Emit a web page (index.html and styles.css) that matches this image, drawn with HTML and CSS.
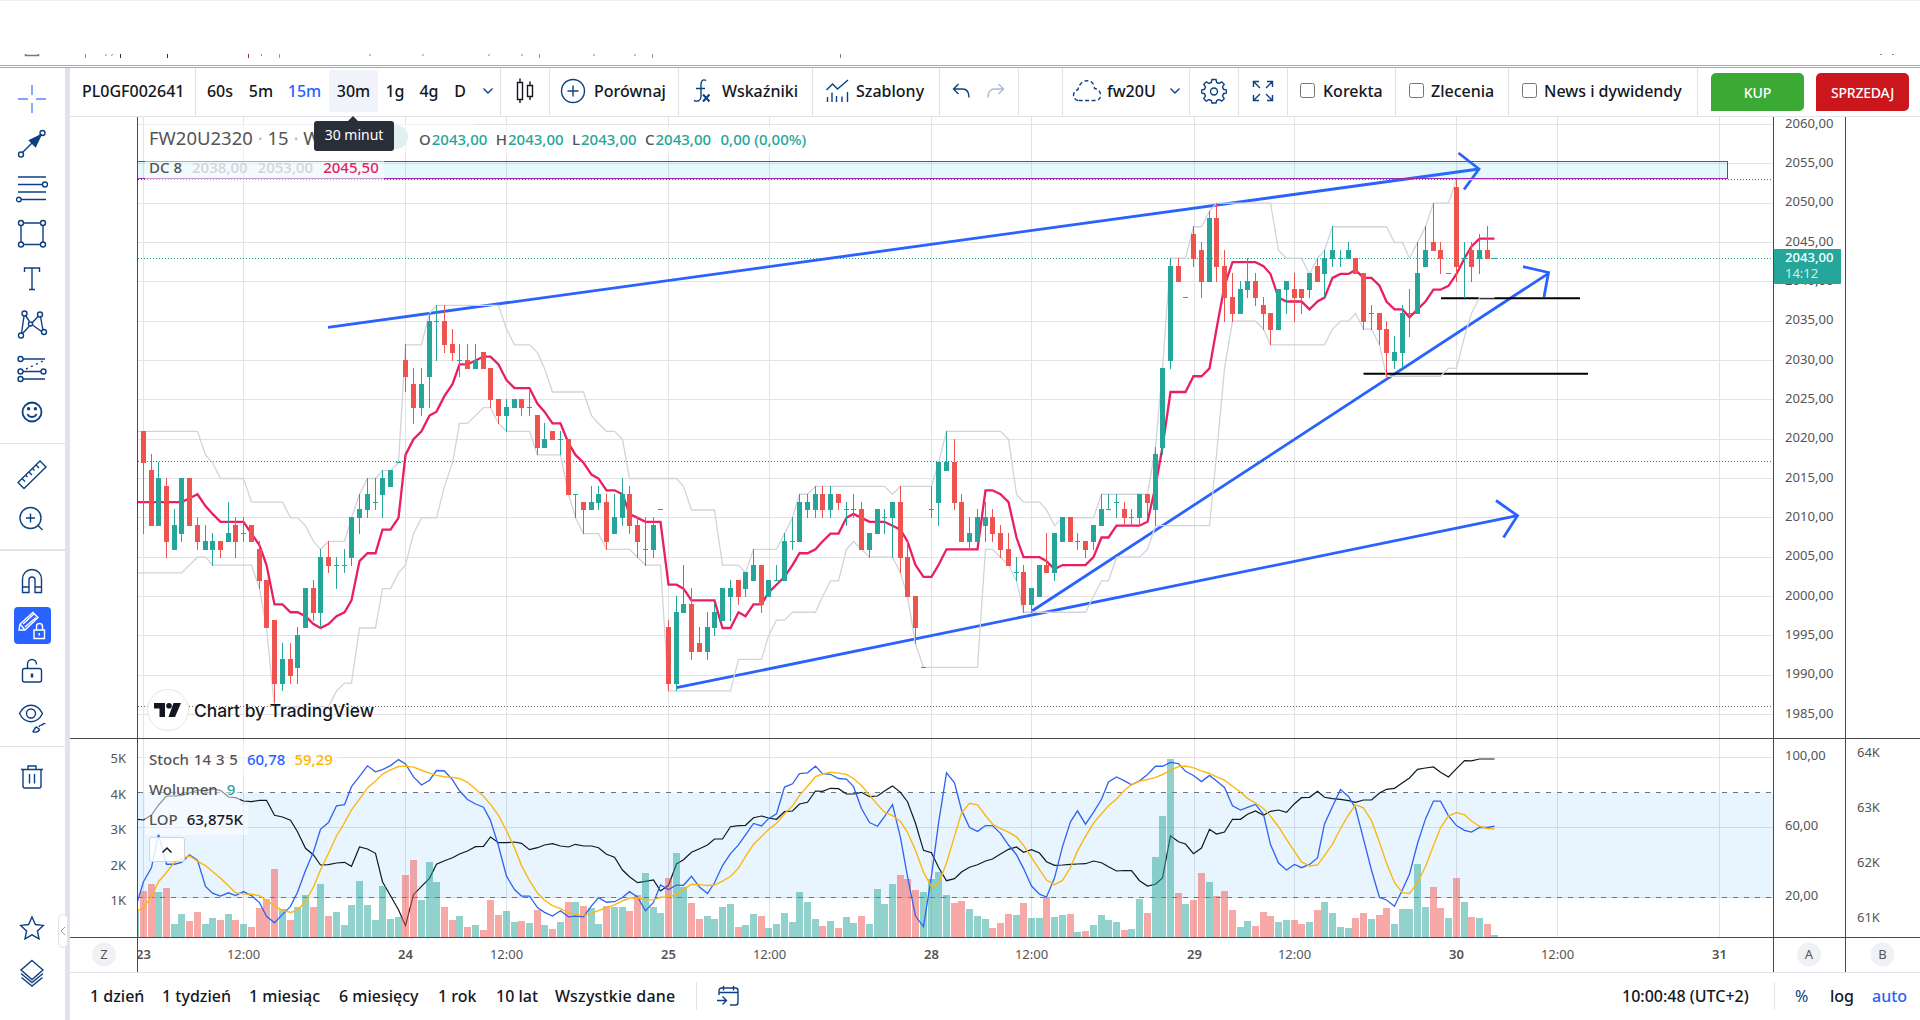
FILE: index.html
```html
<!DOCTYPE html>
<html lang="pl">
<head>
    <meta charset="UTF-8">
    <meta name="viewport" content="width=device-width, initial-scale=1.0">
    <title>FW20U2320</title>
    <link rel="stylesheet" href="styles.css">
</head>
<body>

<div class="browser-strip">
    <svg width="1920" height="65" viewBox="0 0 1920 65" fill="none">
        <path d="M25.500 54v1.500h13V54" stroke="#777" stroke-width="1.500"/>
        <path d="M85.500 54v4M261.500 54v2M279.500 54v4M539.500 54v4M652.500 54v4" stroke="#999"/>
        <path d="M106.500 54l-1 2M112.500 54l-1 2M370.500 54l-1 2M423.500 54l-1 2M489.500 54l-1 2M522.500 54l-1 2M594.500 54l-1 2M635.500 54l-1 2M1880 54.500h2M1892 54.500h2" stroke="#888"/>
        <path d="M120.500 54v4M167.500 54v4" stroke="#333"/>
        <path d="M248.500 54v4" stroke="#933"/>
        <path d="M840.500 54v4" stroke="#77a"/>
    </svg>
</div>

<div class="app">
    <nav class="sidebar">
        <div class="tools tools-draw">
            <button class="tool"><svg width="32" height="32" viewBox="0 0 32 32" class="light"><path d="M16 2v10M16 20v10M2 16h10M20 16h10"/></svg></button>
            <button class="tool"><svg width="32" height="32" viewBox="0 0 32 32"><path d="M6.500 24.500L24 7"/><circle cx="5" cy="26.500" r="2.500"/><circle cx="26.500" cy="5" r="2.500"/><path class="solid" d="M25 7L13.500 12.500l6 6z"/></svg></button>
            <button class="tool"><svg width="32" height="32" viewBox="0 0 32 32"><path d="M2 4h28M2 11.500h25M2 19h28M5 26.500h25"/><circle cx="29" cy="11.500" r="2.500"/><circle cx="2.800" cy="26.500" r="2.300"/></svg></button>
            <button class="tool"><svg width="32" height="32" viewBox="0 0 32 32"><path d="M7.500 5h17M7.500 26.500h17M5 7.500v16.500M27 7.500v16.500"/><circle cx="5" cy="5" r="2.500"/><circle cx="27" cy="5" r="2.500"/><circle cx="5" cy="26.500" r="2.500"/><circle cx="27" cy="26.500" r="2.500"/></svg></button>
            <button class="tool"><svg width="32" height="32" viewBox="0 0 32 32"><path d="M8.500 9V5h15v4M16 5v21.500M13 26.500h6"/></svg></button>
            <button class="tool"><svg width="32" height="32" viewBox="0 0 32 32"><path d="M8 8L5.500 25.500M9.500 7.500l4 6M16 15l6.500-7M7 25l6.500-7M16.500 17l9 6.500M24.500 8.500l2.500 14"/><circle cx="8.500" cy="5.500" r="2.500"/><circle cx="24" cy="6.500" r="2.500"/><circle cx="14.500" cy="16" r="2"/><circle cx="5" cy="27.500" r="2.500"/><circle cx="28" cy="24" r="2.500"/></svg></button>
            <button class="tool"><svg width="32" height="32" viewBox="0 0 32 32"><path d="M7 6h22M7 18.500h18M7 26h22"/><path d="M10 16l17-8" stroke-dasharray="2 3.500"/><circle cx="4.500" cy="6" r="2.500"/><circle cx="4.500" cy="18.500" r="2.500"/><circle cx="27.500" cy="18.500" r="2.500"/><circle cx="4.500" cy="26" r="2.500"/></svg></button>
            <button class="tool tool-smile"><svg width="24" height="24" viewBox="0 0 24 24"><circle cx="12" cy="12" r="9.500" stroke-width="1.800"/><circle class="solid" cx="8.600" cy="8.800" r="1"/><circle class="solid" cx="15.400" cy="8.800" r="1"/><path d="M7.500 14c1.500 4 7.500 4 9 0" stroke-width="1.800"/></svg></button>
        </div>
        <div class="tools tools-measure">
            <button class="tool"><svg width="32" height="32" viewBox="0 0 32 32"><path d="M2 24.500L24 3l6 6L8 30.500zM6 20.500l3 3M9.500 17l2 2M13 14l3 3M16.500 10.500l2 2M20 7l3 3"/></svg></button>
            <button class="tool"><svg width="32" height="32" viewBox="0 0 32 32"><circle cx="14.500" cy="15" r="10.500"/><path d="M14.500 10.500v9M10 15h9M21.500 22l5 5"/></svg></button>
        </div>
        <div class="tools tools-lock">
            <button class="tool"><svg width="32" height="32" viewBox="0 0 32 32"><path d="M6.500 27.500V14a9.500 9.500 0 0 1 19 0v13.500h-6.500V15a3 3 0 0 0-6 0v12.500zM6.500 22h6.500M19 22h6.500"/></svg></button>
            <button class="tool"><span class="active"><svg width="34" height="34" viewBox="0 0 34 34"><path d="M4 21l1-6L18 3.500l5 5L10 21zM5 15l4.500 5.500M8 15l11-10M10 18L21 8.500"/><path d="M19 21h10.500v8.500H19zM21.500 21v-3.500a3 3 0 0 1 6 0V21M24.200 24v2.500"/></svg></span></button>
            <button class="tool"><svg width="32" height="32" viewBox="0 0 32 32"><rect x="6.500" y="13.500" width="19" height="13.500" rx="2"/><path d="M11.500 13.500V9a4.500 4.500 0 0 1 9 0v.5"/><path d="M16 18.500v4" stroke-width="2.500"/></svg></button>
            <button class="tool"><svg width="32" height="34" viewBox="0 0 32 34"><path d="M3.500 14.500C9 3.500 21 3.500 26.500 14.500 21 25.500 9 25.500 3.500 14.500z"/><circle cx="15" cy="14.500" r="4.500"/><path d="M16.500 32.500c2 0 1.500-3.500 4-4.500l3 2.500c-1 3-4.500 3-7 2zM23 28c1-3 2.500-1 3.500-2.500s1.500-.5 3-1"/></svg></button>
        </div>
        <div class="tools tools-trash">
            <button class="tool"><svg width="32" height="32" viewBox="0 0 32 32"><path d="M5 8.500h22M7 8.500V25a2 2 0 0 0 2 2h14a2 2 0 0 0 2-2V8.500M12 8V5h8v3M13.500 13v9.500M18.500 13v9.500"/></svg></button>
        </div>
        <div class="tools-bottom">
            <button class="tool"><svg width="32" height="32" viewBox="0 0 32 32"><path d="M16 5l3.400 7.500 7.900.9-5.900 5.500 1.600 7.900-7-4-7 4 1.600-7.900-5.900-5.500 7.900-.9z"/></svg></button>
            <button class="tool"><svg width="32" height="32" viewBox="0 0 32 32"><path d="M16 3.500l11 9.500-11 9.500L5 13zM5 16.500L16 25.500l11-9M5.500 20.500l10.500 8.500 10.500-8.500"/></svg></button>
        </div>
        <div class="collapse-tab"><svg width="6" height="10" viewBox="0 0 6 10"><path d="M5 1L1 5l4 4"/></svg></div>
    </nav>

    <div class="main">
        <header class="topbar">
            <div class="group g-symbol">PL0GF002641</div>
            <div class="group g-intervals">
                <span class="int i-60">60s</span><span class="int i-5">5m</span><span class="int i-15 blue">15m</span><span class="int i-30">30m<span class="tooltip">30 minut</span></span><span class="int i-1g">1g</span><span class="int i-4g">4g</span><span class="int i-d">D</span>
                <svg class="chev" width="12" height="8" viewBox="0 0 12 8"><path d="M1.500 1.500L6 6l4.500-4.500"/></svg>
            </div>
            <div class="group g-style"><svg width="20" height="28" viewBox="0 0 20 28" class="dark"><path d="M1.500 5.500h5v17h-5zM4 1.500v4M4 22.500V26M11.500 8.500h5v11h-5zM14 4.500v4M14 19.500V23"/></svg></div>
            <div class="group g-compare"><svg width="26" height="26" viewBox="0 0 26 26"><circle cx="13" cy="13" r="11.500"/><path d="M13 7.500v11M7.500 13h11"/></svg><span>Porównaj</span></div>
            <div class="group g-indicators"><svg width="20" height="26" viewBox="0 0 20 26"><path d="M14 2.500c-3-1.500-5 0-5 4v12c0 4-3.500 5.500-7 4M4 10.500h9"/><path d="M11 16.500l6.500 7M17.500 16.500l-6.500 7" stroke-width="2"/></svg><span>Wskaźniki</span></div>
            <div class="group g-templates"><svg width="26" height="26" viewBox="0 0 26 26"><path d="M1.500 12L7.500 6l5 5L23 2M2.500 19v5M7 14.500V24M11.500 18v6M17 18.500V24M22.500 14v10"/></svg><span>Szablony</span></div>
            <div class="group g-undo"><svg width="18" height="16" viewBox="0 0 18 16"><path d="M6.500 1L1.500 6l5 5M1.500 6h9c4 0 6.500 3 6.500 8.500"/></svg><svg class="faded" width="18" height="16" viewBox="0 0 18 16"><path d="M11.500 1l5 5-5 5M16.500 6h-9C3.500 6 1 9 1 14.500"/></svg></div>
            <div class="group g-empty"></div>
            <div class="group g-layout"><svg width="30" height="24" viewBox="0 0 30 24" stroke-dasharray="4 2.500"><path d="M6 21.500c-6-1.500-6-9 0-11C8-1 22-1 22.500 9.500c8 1 8 12 1 12z"/></svg><span>fw20U</span><svg class="chev" width="12" height="8" viewBox="0 0 12 8"><path d="M1.500 1.500L6 6l4.500-4.500"/></svg></div>
            <div class="group g-gear"><svg width="26" height="26" viewBox="0 0 26 26"><path d="M11 1.500h4l.7 3 2.300 1 2.700-1.700 2.500 2.500L21.500 9l1 2.300 3 .7v3l-3 .7-1 2.300 1.700 2.700-2.500 2.500-2.700-1.700-2.300 1-.7 2.500h-4l-.7-2.500-2.300-1-2.700 1.700-2.500-2.500L4.500 18l-1-2.300-3-.7v-3l3-.7 1-2.300-1.700-2.700 2.500-2.500L8 5.500l2.300-1z"/><circle cx="13" cy="13.500" r="3.500"/></svg></div>
            <div class="group g-full"><svg width="22" height="22" viewBox="0 0 22 22"><path d="M1.500 7V1.500H7M15 1.500h5.500V7M20.500 15v5.500H15M7 20.500H1.500V15M1.500 1.500L8 8M20.500 1.500L14 8M20.500 20.500L14 14M1.500 20.500L8 14"/></svg></div>
            <label class="group g-check1"><input type="checkbox"><span>Korekta</span></label>
            <label class="group g-check2"><input type="checkbox"><span>Zlecenia</span></label>
            <label class="group g-check3"><input type="checkbox"><span>News i dywidendy</span></label>
            <div class="trade"><button class="buy">KUP</button><button class="sell">SPRZEDAJ</button></div>
        </header>

        <div class="chart">
            <svg id="chart" width="1850" height="855" viewBox="70 117 1850 855"></svg>

            <div class="legend legend-title"><span class="name">FW20U2320 <i>·</i> 15 <i>·</i> W</span><span class="status"></span></div>
            <div class="legend legend-ohlc">O<b>2043,00</b> H<b>2043,00</b> L<b>2043,00</b> C<b>2043,00</b> <b>0,00 (0,00%)</b></div>
            <div class="legend legend-dc">DC 8<span class="c-grey">2038,00</span><span class="c-grey">2053,00</span><span class="c-pink">2045,50</span></div>
            <div class="legend legend-stoch">Stoch 14 3 5<span class="c-blue">60,78</span><span class="c-yellow">59,29</span></div>
            <div class="legend legend-vol">Wolumen<span class="c-green">9</span></div>
            <div class="legend legend-lop">LOP<span class="c-black">63,875K</span></div>
            <div class="legend-toggle"><svg width="12" height="8" viewBox="0 0 12 8"><path d="M1.500 6.500L6 2l4.500 4.500"/></svg></div>
            <div class="tv-logo">
                <span class="tv-circle"><svg width="28" height="14" viewBox="0 0 28 14"><path d="M0 0h11v14H5.500V5.500H0zM19.500 0H27l-6 14h-6.500z"/><circle cx="15" cy="2.800" r="2.800"/></svg></span>
                <span class="tv-text">Chart by TradingView</span>
            </div>
        </div>

        <footer class="bottombar">
            <span class="r r1">1 dzień</span><span class="r r2">1 tydzień</span><span class="r r3">1 miesiąc</span><span class="r r4">6 miesięcy</span><span class="r r5">1 rok</span><span class="r r6">10 lat</span><span class="r r7">Wszystkie dane</span>
            <span class="vsep"></span>
            <svg class="cal" width="24" height="22" viewBox="0 0 24 22"><path d="M3 10V5.500A2.500 2.500 0 0 1 5.500 3h14A2.500 2.500 0 0 1 22 5.500v12a2.500 2.500 0 0 1-2.500 2.500H14M3 7.500h19M7.500 1v4.500M17.500 1v4.500M1 15.500h9M6.500 11.500l4 4-4 4"/></svg>
            <span class="clock">10:00:48 (UTC+2)</span>
            <span class="vsep"></span>
            <span class="pct">%</span><span class="log">log</span><span class="auto">auto</span>
        </footer>
    </div>
</div>

<script src="chart.js"></script>
</body>
</html>
```
FILE: styles.css
```css
* {
    box-sizing: border-box;
}

body {
    margin: 0;
    width: 1920px;
    height: 1020px;
    overflow: hidden;
    background-color: #fff;
    font-family: "Noto Sans", "Open Sans", sans-serif;
    font-size: 16px;
    color: #131722;
}

svg {
    display: block;
    flex: none;
}

.sidebar svg, .topbar svg, .bottombar svg {
    fill: none;
    stroke: #0d4080;
    stroke-width: 1.4;
}

button {
    border: none;
    padding: 0;
    background: none;
    font-family: inherit;
}

.browser-strip {
    height: 68px;
    border-top: 1px solid #f0f0f0;
    border-bottom: 1px solid #a8a8a8;
}

.browser-strip svg {
    height: 65px;
    margin-top: -1px;
    box-shadow: 0 1px 0 #a8a8a8;
}

.app {
    display: flex;
    height: 952px;
}

/* left toolbar */
.sidebar {
    position: relative;
    display: flex;
    flex-direction: column;
    flex: none;
    width: 70px;
    border-right: 5px solid #e0e3eb;
}

.tools {
    border-bottom: 1px solid #e0e3eb;
}

.tool {
    display: flex;
    align-items: center;
    justify-content: center;
    width: 64px;
    height: 45px;
}

.tool-smile {
    height: 41px;
}

.tools-draw {
    height: 376px;
    padding-top: 8px;
}

.tools-measure {
    height: 107px;
    border-bottom-width: 2px;
    padding-top: 7px;
}

.tools-lock {
    height: 196px;
    padding-top: 7px;
}

.tools-trash {
    border-bottom: none;
    padding-top: 7px;
}

.tools-bottom {
    margin-top: auto;
    padding-bottom: 25px;
}

.sidebar svg .solid {
    fill: #0d4080;
}

.sidebar svg.light {
    stroke: #5b84ff;
}

.active {
    display: flex;
    align-items: center;
    justify-content: center;
    width: 37px;
    height: 37px;
    border-radius: 4px;
    background-color: #2962ff;
}

.sidebar .active svg {
    stroke: #fff;
}

.collapse-tab {
    position: absolute;
    left: 58px;
    top: 846px;
    display: flex;
    align-items: center;
    justify-content: center;
    width: 10px;
    height: 34px;
    border: 1px solid #e0e3eb;
    border-radius: 5px;
    background-color: #fff;
}

.sidebar .collapse-tab svg {
    stroke: #9598a1;
    stroke-width: 1;
}

/* top toolbar */
.main {
    display: flex;
    flex-direction: column;
    width: 1850px;
}

.topbar {
    display: flex;
    height: 49px;
    border-bottom: 1px solid #e0e3eb;
    font-weight: 500;
}

.group {
    display: flex;
    align-items: center;
    flex: none;
    border-right: 1px solid #e0e3eb;
    padding-bottom: 3px;
    white-space: nowrap;
}

.g-symbol { width: 126px; padding-left: 12px; }
.g-intervals { width: 305px; }
.g-style { width: 49px; padding-left: 15px; }
.g-compare { width: 129px; padding-left: 10px; gap: 8px; }
.g-indicators { width: 134px; padding-left: 13px; gap: 10px; }
.g-templates { width: 127px; padding-left: 12px; gap: 5px; }
.g-undo { width: 79px; padding-left: 12px; gap: 17px; }
.g-empty { width: 44px; }
.g-layout { width: 127px; padding-left: 9px; gap: 5px; }
.g-gear { width: 49px; justify-content: center; }
.g-full { width: 49px; justify-content: center; }
.g-check1 { width: 108px; padding-left: 12px; gap: 8px; }
.g-check2 { width: 113px; padding-left: 13px; gap: 7px; }
.g-check3 { width: 189px; padding-left: 13px; gap: 7px; }

.topbar svg.dark {
    stroke: #131722;
}

.topbar svg.faded {
    opacity: 0.35;
}

.g-layout .chev {
    margin-left: 8px;
}

.int {
    display: flex;
    align-items: center;
    justify-content: center;
    flex: none;
    height: 42px;
}

.i-60 { width: 48px; }
.i-5 { width: 34px; }
.i-15 { width: 53px; }
.i-30 { width: 49px; margin-left: -2px; border-radius: 3px; background-color: #f0f3fa; position: relative; }
.i-1g { width: 34px; }
.i-4g { width: 34px; }
.i-d { width: 28px; margin-right: 8px; }

.blue {
    color: #2962ff;
}

.tooltip {
    position: absolute;
    z-index: 5;
    left: -15px;
    top: 51px;
    width: 80px;
    height: 30px;
    border-radius: 3px;
    background-color: #2a2e39;
    color: #fff;
    font-size: 14px;
    font-weight: 400;
    line-height: 28px;
    text-align: center;
}

.tooltip::before {
    content: "";
    position: absolute;
    left: 33px;
    top: -5px;
    border: 6px solid transparent;
    border-top: none;
    border-bottom-color: #2a2e39;
}

input {
    width: 15px;
    height: 15px;
    margin: 0;
}

.trade {
    display: flex;
    gap: 12px;
    padding: 5px 0 5px 13px;
}

.trade button {
    width: 93px;
    height: 38px;
    border-radius: 5px 5px 5px 0;
    color: #fff;
    font-size: 14px;
    font-weight: 500;
}

.trade .buy { background-color: #3aaa35; }
.trade .sell { background-color: #cb161d; letter-spacing: -0.2px; }

/* chart */
.chart {
    position: relative;
    height: 855px;
}

#chart {
    overflow: visible;
}

.chart text {
    font-size: 13px;
    fill: #555;
}

.legend {
    position: absolute;
    left: 75px;
    height: 30px;
    padding: 0 5px 0 4px;
    line-height: 29px;
    font-size: 15px;
    font-weight: 500;
    color: #555;
    background-color: rgba(255, 255, 255, 0.5);
    white-space: pre;
}

.legend span {
    margin-left: 9px;
}

.legend b {
    margin-left: 1px;
    margin-right: 4.5px;
    font-weight: 500;
    color: #26a69a;
}

.legend-title { top: 6px; width: 330px; font-size: 18.5px; font-weight: 400; }
.legend-title .name { margin: 0; }
.legend-title i { color: #b2b5be; font-style: normal; }
.legend-title .status {
    position: absolute;
    left: 230px;
    top: 2px;
    width: 24px;
    height: 24px;
    border-radius: 50%;
    background-color: #dff2f0;
}
.legend-ohlc { left: 345px; top: 8px; }
.legend-dc { top: 37px; height: 27px; line-height: 27px; }
.legend-dc span { margin-left: 10px; }
.legend-stoch { top: 628px; word-spacing: 1px; }
.legend-vol { top: 658px; }
.legend-lop { top: 688px; }

.c-grey { color: #d1d4dc; }
.c-pink { color: #e91e63; }
.c-blue { color: #2962ff; }
.c-yellow { color: #ffb300; }
.c-green { color: #26a69a; }
.c-black { color: #131722; }

.legend-toggle {
    position: absolute;
    left: 79px;
    top: 720px;
    display: flex;
    align-items: center;
    justify-content: center;
    width: 36px;
    height: 25px;
    border: 1px solid #d1d4dc;
    border-radius: 3px;
    background-color: rgba(255, 255, 255, 0.85);
}

.legend-toggle svg {
    fill: none;
    stroke: #131722;
    stroke-width: 1.5;
}

.tv-logo {
    position: absolute;
    left: 77px;
    top: 572px;
    display: flex;
    align-items: center;
    gap: 5px;
    height: 42px;
}

.tv-circle {
    display: flex;
    align-items: center;
    justify-content: center;
    width: 42px;
    height: 42px;
    border: 1px solid #e6e6e6;
    border-radius: 50%;
    background-color: #fff;
}

.tv-circle svg {
    fill: #131722;
}

.tv-text {
    font-family: Inter, sans-serif;
    font-size: 17.4px;
    font-weight: 500;
    text-shadow: 0 0 2px #fff, 0 0 2px #fff;
}

/* bottom bar */
.bottombar {
    display: flex;
    align-items: center;
    height: 48px;
    border-top: 1px solid #e0e3eb;
    padding-left: 20px;
    padding-bottom: 1px;
    font-weight: 500;
    white-space: nowrap;
}

.r { flex: none; }
.r1 { width: 72px; }
.r2 { width: 87px; }
.r3 { width: 90px; }
.r4 { width: 99px; }
.r5 { width: 58px; }
.r6 { width: 59px; }
.r7 { width: 141px; letter-spacing: 0.2px; }

.vsep {
    width: 1px;
    height: 28px;
    background-color: #e0e3eb;
}

.cal { margin-left: 19px; }
.clock { width: 152px; margin-left: auto; }
.pct { width: 35px; margin-left: 20px; color: #0d4080; font-weight: 400; }
.log { width: 42px; }
.auto { width: 48px; color: #2962ff; }
```
FILE: chart.js
```js
// candles: [open, high, low, close], relative to 2000
const candles = [
    [21,21,8,17],[16,18,9,9],[9,17,9,15],[14,15,5,7],[6,11,6,9],[8,15,7,15],[15,15,9,9],[9,10,6,7],[6,9,6,7],[6,8,4,7],
    [7,7,5,6],[7,12,7,8],[9,10,5,7],[8,10,7,8],[9,9,7,7],[6,7,1,2],[2,2,-4,-4],[-3,-3,-14,-11],[-11,-6,-12,-8],[-8,-6,-11,-10],
    [-9,-4,-11,-5],[-4,1,-4,1],[1,2,-3,-2],[-2,6,-4,5],[5,7,3,4],[4,5,1,4],[4,6,3,4],[5,10,4,10],[10,13,8,11],[11,15,10,13],
    [12,15,11,12],[13,16,10,15],[14,16,14,16],[17,17,17,17],[30,32,26,28],[27,29,22,24],[24,29,23,27],[28,36,24,35],[35,37,30,35],[35,37,31,32],
    [32,34,30,31],[30,32,28,30],[30,32,29,29],[29,32,29,30],[31,31,29,29],[29,29,24,25],[25,25,22,23],[23,25,21,24],[24,25,24,25],[25,25,23,24],
    [24,26,23,24],[23,23,18,19],[19,22,19,20],[21,21,20,20],[20,21,18,20],[20,20,13,13],[13,13,10,13],[12,12,8,11],[11,14,11,12],[12,14,11,13],
    [12,13,6,7],[8,13,8,10],[10,15,9,13],[13,14,8,9],[9,10,5,7],[6,10,4,6],[6,10,5,9],[11,11,11,11],[-4,-3,-12,-11],[-11,0,-12,-2],
    [-2,4,-2,-1],[-1,1,-8,-7],[-6,-4,-7,-7],[-7,-2,-8,-4],[-4,-1,-5,-2],[-3,1,-3,1],[0,2,-3,1],[2,2,-1,0],[1,3,0,3],[2,6,2,4],
    [4,4,-2,-1],[0,2,0,2],[2,4,2,2],[2,8,2,7],[7,10,6,7],[7,13,7,12],[11,13,10,12],[11,14,10,13],[13,14,10,11],[11,14,10,13],
    [13,13,11,12],[11,12,9,11],[11,13,10,11],[11,12,6,6],[6,8,5,8],[8,11,8,11],[10,11,8,10],[10,12,5,12],[12,14,3,5],[5,7,0,0],
    [0,0,-6,-4],[-9,-9,-9,-9],[11,14,10,11],[12,17,9,17],[16,21,16,17],[17,20,11,12],[12,13,7,7],[7,10,6,8],[7,11,7,10],[9,12,7,10],
    [10,11,7,8],[8,9,5,6],[6,8,4,4],[3,5,2,3],[3,4,-2,-1],[-1,1,-2,1],[0,4,0,4],[4,8,3,3],[3,8,2,8],[7,10,7,10],
    [10,10,7,7],[7,8,6,7],[7,7,5,6],[7,9,6,9],[9,13,9,11],[11,13,11,11],[12,13,10,12],[11,12,9,10],[10,11,9,10],[10,13,9,13],
    [13,13,10,12],[11,19,9,18],[19,29,18,29],[30,43,29,42],[42,43,40,40],[38,38,38,38],[46,47,42,43],[44,45,38,40],[40,49,40,48],[48,50,40,42],
    [42,44,35,38],[38,41,35,36],[36,40,36,39],[39,43,38,40],[40,41,37,38],[37,38,34,36],[36,36,32,34],[34,39,34,39],[39,40,36,40],[39,41,35,38],
    [39,39,36,38],[39,41,38,41],[42,43,40,40],[41,44,38,43],[43,47,42,44],[43,44,42,43],[43,45,43,44],[43,43,41,41],[41,41,34,35],[36,37,34,36],
    [36,36,32,34],[34,35,28,31],[30,33,29,31],[31,37,29,36],[36,39,33,36],[36,45,36,41],[42,47,42,44],[45,50,44,44],[44,45,41,43],[41,41,41,41],
    [52,53,40,42],[43,45,38,43],[44,45,40,42],[43,46,41,44],[44,47,43,43],[43,43,43,43]
];

// bar heights in px
const volume = [
    46,53,45,49,13,23,16,25,13,19,17,23,17,13,10,29,38,68,28,17,30,42,30,53,21,25,12,32,56,32,17,51,18,20,62,77,37,75,55,30,
    17,21,10,12,7,37,22,26,15,16,14,27,12,8,15,35,35,31,29,13,31,30,30,26,42,64,30,24,59,84,50,34,18,21,18,30,33,10,12,23,
    21,9,13,24,15,45,35,18,11,16,9,20,14,21,13,48,33,53,62,58,47,45,58,65,42,34,36,28,21,18,9,14,23,22,34,19,19,40,20,22,
    23,5,6,12,22,17,15,7,8,38,24,80,121,178,44,33,37,64,55,41,46,27,10,16,11,25,21,15,17,17,13,15,27,35,24,10,9,19,24,18,
    22,29,13,28,28,73,30,50,29,19,59,35,20,19,13,2
];

// open interest line, y of every bar starting one bar before the first
const lop = [
    819,820,815,805,796,796,795.5,793,790,790.7,789,790.3,797,797.7,801,801.7,800.3,800.3,815.3,817,820.3,831.7,848.3,855,865,864.7,863,862.3,866.3,847,849,
    853.3,881.7,895.7,909.7,925.7,894.7,886.3,878.3,864.3,860.7,857.7,854,851,846.7,846.3,837,842.7,842.7,842,843.3,849.7,847.7,845,843.7,846,847,844.3,846,846,847.7,
    854.3,857.3,870,876.7,882.7,881.3,880,891,885.3,864,859.7,852.3,848.7,845,839,839,826.7,825.7,825.3,817.7,816,818,819.3,811.7,811,804,802.3,791,791.3,788.3,
    788.7,794,794,792.3,796.7,796,791,786,792.3,801.7,823.3,850.3,852.7,867.3,880.7,878.7,872,867.3,864.7,861,859,854,849.3,847,852.3,849.7,853,861.7,865.3,865,
    864.3,864,863.7,861,862.7,866.7,871,870.5,870.7,880.7,886,884.3,878,835.7,841.7,844,853.7,848,829.3,834,832,819.3,819.3,814.3,811,815.3,811.3,810,812.3,803.7,
    797.7,797.3,791.3,797.3,798.7,799.3,800.7,802.3,800,800,793,789.3,788.3,782.7,778,769.3,768,767,772.3,777,768.7,760.7,760.9,759,759,759
];

// stochastic values that need bars from before the visible range
const kStart = [29,37.1,56.2,39,39,40,44.4,41.3,26.3,22.5,20.8,22.7,21.1,23.4,21.1];
const dStart = [14.5,20.4,29,34.3];

const x = i => Math.floor(143.3 + i * 7.7235) + 0.5;
const y = p => 124.5 + (60 - p) * 7.867;
const ys = v => 757.5 + (100 - v) * 1.75;
const UP = '#26a69a', DOWN = '#ef5350', GRID = '#e3e3e4', AXIS = '#4a4a4a';

const out = [];
const line = (x1, y1, x2, y2, stroke, extra = '') =>
    out.push(`<line x1="${x1}" y1="${y1}" x2="${x2}" y2="${y2}" stroke="${stroke}" ${extra}/>`);
const rect = (rx, ry, w, h, fill, extra = '') =>
    out.push(`<rect x="${rx}" y="${ry}" width="${w}" height="${h}" fill="${fill}" ${extra}/>`);
const poly = (pts, stroke, width) =>
    out.push(`<polyline points="${pts.map(p => p.join(',')).join(' ')}" fill="none" stroke="${stroke}" stroke-width="${width}"/>`);
const text = (tx, ty, s, extra = '') => out.push(`<text x="${tx}" y="${ty}" ${extra}>${s}</text>`);

const days = [[143.5, '23', 1], [243.5, '12:00'], [405.5, '24', 1], [506.5, '12:00'], [668.5, '25', 1], [769.5, '12:00'], [931.5, '28', 1],
    [1031.5, '12:00'], [1194.5, '29', 1], [1294.5, '12:00'], [1456.5, '30', 1], [1557.5, '12:00'], [1719.5, '31', 1]];

out.push('<defs><clipPath id="plot"><rect x="138" y="117" width="1635" height="820"/></clipPath><clipPath id="time"><rect x="138" y="938" width="1635" height="34"/></clipPath></defs>');
out.push('<g clip-path="url(#plot)">');

// grid
days.forEach(d => line(d[0], 117, d[0], 937, GRID));
for (let p = 60; p >= -15; p -= 5) {
    const gy = Math.floor(y(p)) + 0.5;
    line(138, gy, 1773, gy, GRID);
}
[100, 60, 20].forEach(v => line(138, ys(v), 1773, ys(v), GRID));

[179.5, 461.5, 706.5].forEach(ly => line(138, ly, 1773, ly, '#666', 'stroke-dasharray="1 2"'));
line(138, 258.5, 1773, 258.5, UP, 'stroke-dasharray="1 2"');

// trend lines
poly([[328, 327.3], [1479, 169]], '#2962ff', 2.8);
poly([[1458.5, 153], [1479, 169], [1464, 189.5]], '#2962ff', 2.8);
poly([[676.5, 687.7], [1517.5, 515.7]], '#2962ff', 2.8);
poly([[1496, 500.5], [1517.5, 515.7], [1503.5, 537.5]], '#2962ff', 2.8);
poly([[1032, 611], [1548.5, 273.3]], '#2962ff', 2.8);
poly([[1523, 266.7], [1548.5, 272.5], [1544, 297]], '#2962ff', 2.8);
line(1441, 298.3, 1580, 298.3, '#000', 'stroke-width="2"');
line(1363.5, 373.8, 1588, 373.8, '#000', 'stroke-width="2"');

// Donchian channel, 8 bars
const hist = [[0,21,3,0],[0,21,3,0],[0,21,3,0],[0,21,3,0],[0,21,3,0],[0,21,3,0],[0,21,3,0],[0,21,4,0]].concat(candles);
const upper = [[135, y(21)]], lower = [[135, y(3)]], basis = [[135, y(12)]];
candles.forEach((c, i) => {
    const win = hist.slice(i + 1, i + 9);
    const hi = Math.max(...win.map(b => b[1]));
    const lo = Math.min(...win.map(b => b[2]));
    upper.push([x(i), y(hi)]);
    lower.push([x(i), y(lo)]);
    basis.push([x(i), y((hi + lo) / 2)]);
});
poly(upper, '#d1d4dc', 1.3);
poly(lower, '#d1d4dc', 1.3);
poly(basis, '#e91e63', 2.3);

candles.forEach((c, i) => {
    const color = c[3] >= c[0] ? UP : DOWN;
    const cx = x(i);
    const row = p => Math.floor(y(p));
    const top = row(Math.max(c[0], c[3])), bottom = row(Math.min(c[0], c[3])) + 1;
    rect(cx - 0.5, row(c[1]), 1, row(c[2]) + 1 - row(c[1]), color);
    rect(cx - 2.5, top, 5, bottom - top, color);
});

rect(130, 161.5, 1597.5, 17, 'rgba(0,188,212,.1)', 'stroke="#9c27b0"');

// lower pane
rect(138, 792.5, 1635, 105, 'rgba(33,150,243,.1)');
[792.5, 897.5].forEach(ly => line(138, ly, 1773, ly, '#6c7682', 'stroke-dasharray="5 6"'));
poly(lop.map((v, i) => [x(i - 1), v]), '#0c1a24', 1.2);
rect(138, 911, 1, 26, 'rgba(38,166,154,.5)');
volume.forEach((h, i) => rect(x(i) - 3.5, 937 - h, 7, h, candles[i][3] >= candles[i][0] ? 'rgba(38,166,154,.5)' : 'rgba(239,83,80,.5)'));

// Stoch 14 3 5
const raw = candles.map((c, i) => {
    const win = candles.slice(Math.max(0, i - 13), i + 1);
    const hi = Math.max(...win.map(b => b[1]));
    const lo = Math.min(...win.map(b => b[2]));
    return (c[3] - lo) / (hi - lo) * 100;
});
const k = raw.map((v, i) => i < 15 ? kStart[i] : (raw[i] + raw[i - 1] + raw[i - 2]) / 3);
const d = k.map((v, i) => i < 4 ? dStart[i] : (k[i] + k[i - 1] + k[i - 2] + k[i - 3] + k[i - 4]) / 5);
poly([[135.8, 907]].concat(k.map((v, i) => [x(i), ys(v)])), '#2f62f0', 1.3);
poly([[135.8, 912]].concat(d.map((v, i) => [x(i), ys(v)])), '#fbb80f', 1.4);
out.push('</g>');

// axes
line(137.5, 117, 137.5, 972, AXIS);
line(1773.5, 117, 1773.5, 972, AXIS);
line(1845.5, 117, 1845.5, 972, AXIS);
line(70, 738.5, 1920, 738.5, AXIS);
line(70, 937.5, 1920, 937.5, AXIS);

for (let p = 60; p >= -15; p -= 5) {
    text(1785, Math.round(y(p) + 3), `${2000 + p},00`, 'textLength="48.500" lengthAdjust="spacingAndGlyphs"');
}
text(1785, 759.5, '100,00');
text(1785, 829.5, '60,00');
text(1785, 899.5, '20,00');
['64K', '63K', '62K', '61K'].forEach((s, i) => text(1857, 757 + i * 55, s));
['5K', '4K', '3K', '2K', '1K'].forEach((s, i) => text(126, 763 + i * 35.5, s, 'text-anchor="end"'));

rect(1774, 249, 67, 35, UP, 'rx="1"');
text(1785, 262, '2043,00', 'style="fill:#fff" font-weight="500" textLength="48.500" lengthAdjust="spacingAndGlyphs"');
text(1785, 278, '14:12', 'style="fill:#d4eeeb"');

out.push('<g clip-path="url(#time)">');
days.forEach(t => text(t[0], 959, t[1], 'text-anchor="middle"' + (t[2] ? ' font-weight="600"' : '')));
out.push('</g>');

[[104, 'Z'], [1809, 'A'], [1882.5, 'B']].forEach(b => {
    out.push(`<circle cx="${b[0]}" cy="954.5" r="12" fill="#f0f1f5"/>`);
    text(b[0], 959, b[1], 'text-anchor="middle"');
});

document.getElementById('chart').innerHTML = out.join('');
```
